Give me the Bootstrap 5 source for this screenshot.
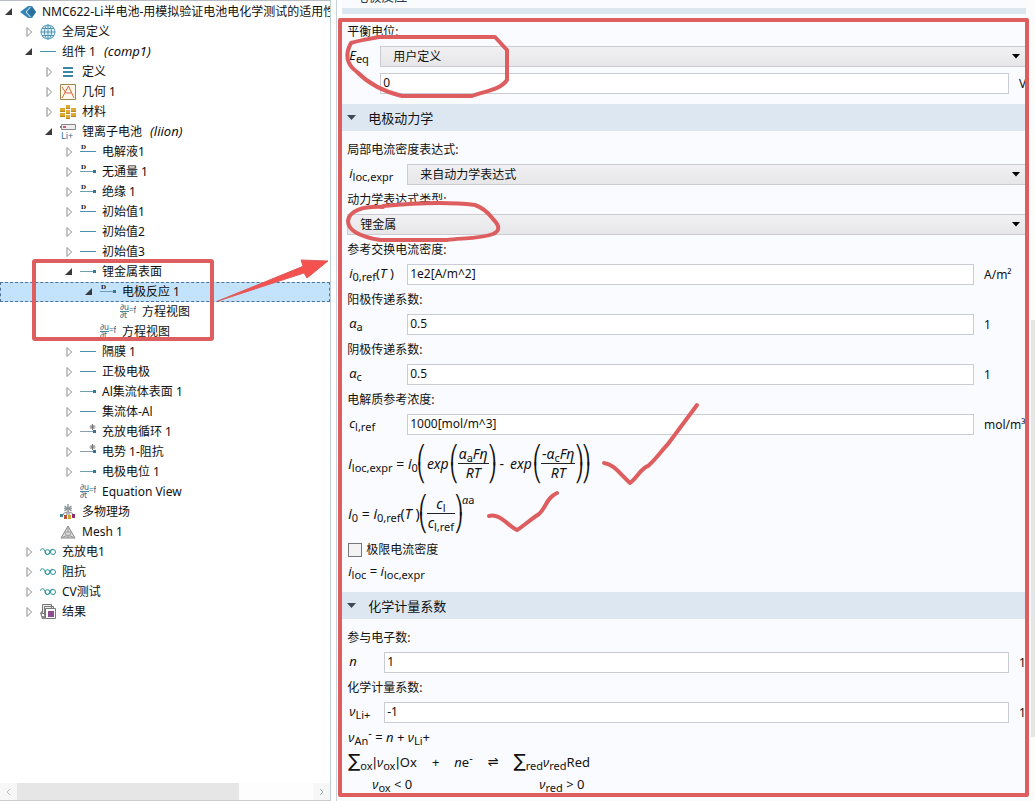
<!DOCTYPE html>
<html lang="zh-CN">
<head>
<meta charset="utf-8">
<meta name="viewport" content="width=device-width, initial-scale=1">
<title>NMC622-Li半电池</title>
<link href="https://cdn.jsdelivr.net/npm/bootstrap@5.3.0/dist/css/bootstrap.min.css" rel="stylesheet">
<style>
  :root { --pen: #de5e60; }
  body { font: 12px/20px "Noto Sans", "Noto Sans CJK SC", sans-serif; color: #111; background: #fff; }

  /* model tree */
  .tree-pane { flex: 0 0 32%; min-width: 0; padding-top: 1px; border-top: 1px solid #b9bec4; border-right: 1px solid #bccfd2; }
  .tree-row { height: 20px; padding-left: calc(var(--lv) * 20px + 4px); white-space: nowrap; }
  .tree-row i { font-size: 13px; line-height: 18px; padding-bottom: 2px; }
  .lv0 { --lv: 0; } .lv1 { --lv: 1; } .lv2 { --lv: 2; } .lv3 { --lv: 3; } .lv4 { --lv: 4; } .lv5 { --lv: 5; }
  .tree-row svg { display: block; flex: none; }
  .twist { width: 10px; height: 20px; margin-right: 6px; flex: none; padding: 0; border: 0; background: none; }
  .tree-row .ico { width: 16px; height: 16px; margin-right: 6px; }
  .tree-row.active { background: #c3e2fb; outline: 1px dashed #4d7396; outline-offset: -1px; }
  .hbar { height: 18px; background: #fdfdfd; border-bottom: 1px solid #c8cccc; }
  .hbar button { width: 17px; padding: 0; border: 0; background: #f7f7f7; }
  .hbar .thumb { width: 75%; background: #e6e6e6; }

  /* settings */
  .set-pane { padding-left: 5px; min-width: 0; }
  .set-inner { border-left: 1px solid #c9d3d8; padding-left: 5px; min-width: 0; }
  .sheet { background: #fafbfe; min-width: 0; }
  .rail { width: 9px; flex: none; background: #fcfcfd; }
  .rail-thumb { width: 4px; margin-top: 320px; height: 52%; background: #e6e6e6; }
  .prev-head { height: 8px; padding: 0 0 2px 13px; font-size: 13px; line-height: 20px; color: #243a52; }
  .strip { height: 6px; margin: 0 -5px 5px 0; background: #dde7f2; }
  .sect { height: 27px; margin: 8px -5px 6px 0; padding-left: 5px; background: #dde7f2; font-size: 13px; }
  .sect svg { width: 9px; height: 6px; margin-right: 12px; }
  .line { height: 25px; padding-left: 5px; white-space: nowrap; }
  .sub-line { margin-top: 2px; }
  .sym-a { width: 33px; } .sym-b { width: 60px; } .sym-c { width: 37px; }
  .unit { padding-left: 10px; overflow: hidden; flex: none; }
  .unit-s { width: 17px; } .unit-l { width: 52px; overflow: visible; }
  .form-control, .form-select { font-size: 12px; line-height: 15px; height: 21px; min-height: 0; border: 1px solid #c9ccd4; border-radius: 0; color: #111; min-width: 0; }
  .form-control { padding: 0 2px 2px; background: #fff; }
  .form-select { padding: 0 24px 0 12px; border-right: 0; border-color: #cbcbd0; background-color: #ebebed;
    background-image: url("data:image/svg+xml,%3Csvg xmlns='http://www.w3.org/2000/svg' viewBox='0 0 8 5'%3E%3Cpath d='M0 0h8L4 4.5z'/%3E%3C/svg%3E"), linear-gradient(#f0f0f2, #e7e7e9);
    background-size: 8px 5px, 100% 100%; background-position: right 6px center, 0 0; background-repeat: no-repeat; }
  .form-check-input[type=checkbox] { width: 14px; height: 14px; margin: 0 4px 0 1px; border: 1px solid #777; border-radius: 0; background: #f3f3f3; }

  /* formulas */
  .fx { font-size: 13px; line-height: 18px; padding-left: 6px; white-space: nowrap; }
  .line > .fx { padding: 0 0 4px 2px; flex: none; }
  .fx sub, .fx sup { font-size: 11px; font-style: normal; line-height: 0; }
  .fx sub { bottom: -3px; } .fx sup { top: -5px; }
  .big { font-size: 14px; padding-top: 8px; padding-bottom: 4px; }
  .func { padding: 0 2px; }
  .frac { display: inline-flex; flex-direction: column; text-align: center; }
  .frac > span { padding: 0 1px; height: 19px; }
  .frac > span:first-child { border-bottom: 1px solid #222; }
  .paren { display: inline-flex; flex-direction: column; font: 18px/18px "DejaVu Sans", sans-serif; width: 7px; align-items: center; }
  .sym { font-family: "DejaVu Sans", sans-serif; }
  .sigma { font-family: "DejaVu Sans", sans-serif; font-size: 18px; line-height: 18px; }
  .sum-row { padding-bottom: 2px; }
  .term { margin-left: 15px; }
  .cond { margin-left: 127px; }
  .pw { align-self: flex-start; }

  /* marker pen */
  .pen { position: absolute; left: 0; top: 0; pointer-events: none; fill: none; stroke: var(--pen); stroke-width: 4; stroke-linecap: round; stroke-linejoin: round; }
  .frame { position: absolute; inset: 18px 6px 4px 7px; border: 4px solid var(--pen); border-radius: 2px; pointer-events: none; }
</style>
</head>
<body>
<svg width="0" height="0" class="position-absolute" aria-hidden="true">
  <symbol id="closed" viewBox="0 0 10 20"><path d="M3 5.5v9l4.500-4.500z" fill="#fff" stroke="#8c8c8c"/></symbol>
  <symbol id="open" viewBox="0 0 10 20"><path d="M8 6v7H1z" fill="#3a3a3a"/></symbol>
  <symbol id="root" viewBox="0 0 16 16"><path d="M0 8 8 2h4l4 6-4 6H8z" fill="#3787b5"/><path d="M8 8l4-5 4 5-4 5z" fill="#2b6f9e"/><path d="M10.500 3 6 8l4.500 5" fill="none" stroke="#d5ecf8"/></symbol>
  <symbol id="globe" viewBox="0 0 16 16"><g fill="#e6f4fa" stroke="#4b93b3"><circle cx="8" cy="8" r="7"/><ellipse cx="8" cy="8" rx="3.500" ry="7"/><path d="M8 1v14M1 8h14M2 4.500h12M2 11.500h12"/></g></symbol>
  <symbol id="dash" viewBox="0 0 16 16"><path d="M0 7.500h16" stroke="#4f8fae"/></symbol>
  <symbol id="dashdot" viewBox="0 0 16 16"><path d="M0 7.500h14" stroke="#6f9fae"/><path d="M13 6h3v3h-3z" fill="#2c7d96"/></symbol>
  <symbol id="dmark" viewBox="0 0 16 16"><path d="M0 7.500h16" stroke="#4f8fae"/><text x="1" y="5" font-family="Liberation Serif, serif" font-size="7" font-weight="bold" fill="#111">D</text></symbol>
  <symbol id="dmarkdot" viewBox="0 0 16 16"><path d="M0 7.500h14" stroke="#6f9fae"/><path d="M13 6h3v3h-3z" fill="#3a7390"/><text x="1" y="5" font-family="Liberation Serif, serif" font-size="7" font-weight="bold" fill="#111">D</text></symbol>
  <symbol id="stardot" viewBox="0 0 16 16"><path d="M0 7.500h14" stroke="#8aa2ad"/><path d="M13 6h3v3h-3z" fill="#3a7390"/><path d="M12.500 0v6M9.500 3h6M10.500 1l4 4M14.500 1l-4 4" stroke="#777"/></symbol>
  <symbol id="lines3" viewBox="0 0 16 16"><path d="M3 4h10M3 8h10M3 12h10" stroke="#3a86a8" stroke-width="2"/></symbol>
  <symbol id="geom" viewBox="0 0 16 16"><path d="M.5.500h15v15H.5z" fill="#fff8ec" stroke="#9a8a4a"/><path d="M2 14 8.500 2 14 14M2 3l4 6h5" fill="none" stroke="#d8643c"/></symbol>
  <symbol id="mat" viewBox="0 0 16 16"><g fill="#e0a930"><path d="M6 1h4v4H6zM0 4h5v4H0zM11 4h5v4h-5zM6 6h4v4H6zM0 9h5v4H0zM11 9h5v4h-5zM6 11h4v4H6z"/></g><path d="M6 4h4v1H6zM0 7h5v1H0zM6 9h4v1H6zM0 12h5v1H0zM6 14h4v1H6zM11 7h5v1h-5zM11 12h5v1h-5z" fill="#b58420"/></symbol>
  <symbol id="liion" viewBox="0 0 16 16"><path d="M1.500.500h14v5h-14z" fill="#eee" stroke="#888"/><path d="M3 2h3v2H3z" fill="#c9607a"/><path d="M0 2h1v2H0z" fill="#777"/><text x="1" y="15" font-family="Noto Sans, sans-serif" font-size="9" fill="#2d6f8f">Li+</text></symbol>
  <symbol id="eqn" viewBox="0 0 16 16"><g font-family="Noto Sans, sans-serif" font-size="8" fill="#2b6480"><text x="0" y="6">∂u</text><text x="0" y="14">∂t</text><text x="9" y="9">=f</text></g><path d="M0 7.500h9" stroke="#4b86a0"/></symbol>
  <symbol id="multi" viewBox="0 0 16 16"><path d="M8 0v8M4.500 2l7 5M11.500 2l-7 5M4 4.500h8" stroke="#909a9e" stroke-width="1.500"/><path d="M7 8v3M3 11c0-2 2-2 4-3M8 8c4 1 5 1 5 3M9 9v3" stroke="#777" fill="none"/><path d="M0 10h3v3H0z" fill="#3b8595"/><path d="M4 11h3v4H4z" fill="#b4553e"/><path d="M8 11h3v4H8z" fill="#d6a12f"/><path d="M12 10h3v4h-3z" fill="#8b2f73"/></symbol>
  <symbol id="mesh" viewBox="0 0 16 16"><path d="M8 2 15 14H1z" fill="#ddd" stroke="#8a8a8a"/><path d="M4.500 8h7L8 14zM8 2v6M1 14l7-3 7 3" fill="none" stroke="#9a9a9a"/></symbol>
  <symbol id="study" viewBox="0 0 16 16"><path d="M0 7c1-3 4-3 5 0 0 3 1 3.500 2.500 3.500S10 9 10 8s1-4 3-2" fill="none" stroke="#27939c"/><circle cx="7.500" cy="8" r="2.300" fill="none" stroke="#27939c"/><circle cx="13" cy="8" r="2.500" fill="none" stroke="#27939c"/></symbol>
  <symbol id="result" viewBox="0 0 16 16"><g fill="#eee" stroke="#777"><path d="M2.500.500h9v9h-9zM4.500 2.500h9v9h-9z"/><path d="M5.500 4.500h10v10h-10z" fill="#fff"/></g><path d="M8 7h6v6H8z" fill="#8e4d8e"/><path d="M0 9l2-2v5h3v3H2z" fill="#888"/></symbol>
</svg>

<div class="d-flex vh-100 overflow-hidden">
  <nav class="tree-pane d-flex flex-column position-relative" aria-label="模型树">
    <ul class="list-unstyled mb-0 flex-grow-1 overflow-hidden">
      <li class="tree-row lv0 d-flex align-items-center overflow-hidden"><button class="twist" aria-label="折叠"><svg width="10" height="20"><use href="#open"/></svg></button><svg class="ico"><use href="#root"/></svg>NMC622-Li半电池-用模拟验证电池电化学测试的适用性</li>
      <li class="tree-row lv1 d-flex align-items-center"><button class="twist" aria-label="展开"><svg width="10" height="20"><use href="#closed"/></svg></button><svg class="ico"><use href="#globe"/></svg>全局定义</li>
      <li class="tree-row lv1 d-flex align-items-center"><button class="twist" aria-label="折叠"><svg width="10" height="20"><use href="#open"/></svg></button><svg class="ico"><use href="#dash"/></svg>组件 1 <i class="ms-2">(comp1)</i></li>
      <li class="tree-row lv2 d-flex align-items-center"><button class="twist" aria-label="展开"><svg width="10" height="20"><use href="#closed"/></svg></button><svg class="ico"><use href="#lines3"/></svg>定义</li>
      <li class="tree-row lv2 d-flex align-items-center"><button class="twist" aria-label="展开"><svg width="10" height="20"><use href="#closed"/></svg></button><svg class="ico"><use href="#geom"/></svg>几何 1</li>
      <li class="tree-row lv2 d-flex align-items-center"><button class="twist" aria-label="展开"><svg width="10" height="20"><use href="#closed"/></svg></button><svg class="ico"><use href="#mat"/></svg>材料</li>
      <li class="tree-row lv2 d-flex align-items-center"><button class="twist" aria-label="折叠"><svg width="10" height="20"><use href="#open"/></svg></button><svg class="ico"><use href="#liion"/></svg>锂离子电池 <i class="ms-2">(liion)</i></li>
      <li class="tree-row lv3 d-flex align-items-center"><button class="twist" aria-label="展开"><svg width="10" height="20"><use href="#closed"/></svg></button><svg class="ico"><use href="#dmark"/></svg>电解液1</li>
      <li class="tree-row lv3 d-flex align-items-center"><button class="twist" aria-label="展开"><svg width="10" height="20"><use href="#closed"/></svg></button><svg class="ico"><use href="#dmarkdot"/></svg>无通量 1</li>
      <li class="tree-row lv3 d-flex align-items-center"><button class="twist" aria-label="展开"><svg width="10" height="20"><use href="#closed"/></svg></button><svg class="ico"><use href="#dmarkdot"/></svg>绝缘 1</li>
      <li class="tree-row lv3 d-flex align-items-center"><button class="twist" aria-label="展开"><svg width="10" height="20"><use href="#closed"/></svg></button><svg class="ico"><use href="#dmark"/></svg>初始值1</li>
      <li class="tree-row lv3 d-flex align-items-center"><button class="twist" aria-label="展开"><svg width="10" height="20"><use href="#closed"/></svg></button><svg class="ico"><use href="#dash"/></svg>初始值2</li>
      <li class="tree-row lv3 d-flex align-items-center"><button class="twist" aria-label="展开"><svg width="10" height="20"><use href="#closed"/></svg></button><svg class="ico"><use href="#dash"/></svg>初始值3</li>
      <li class="tree-row lv3 d-flex align-items-center"><button class="twist" aria-label="折叠"><svg width="10" height="20"><use href="#open"/></svg></button><svg class="ico"><use href="#dashdot"/></svg>锂金属表面</li>
      <li class="tree-row lv4 d-flex align-items-center active"><button class="twist" aria-label="折叠"><svg width="10" height="20"><use href="#open"/></svg></button><svg class="ico"><use href="#dmarkdot"/></svg>电极反应 1</li>
      <li class="tree-row lv5 d-flex align-items-center"><span class="twist"></span><svg class="ico"><use href="#eqn"/></svg>方程视图</li>
      <li class="tree-row lv4 d-flex align-items-center"><span class="twist"></span><svg class="ico"><use href="#eqn"/></svg>方程视图</li>
      <li class="tree-row lv3 d-flex align-items-center"><button class="twist" aria-label="展开"><svg width="10" height="20"><use href="#closed"/></svg></button><svg class="ico"><use href="#dash"/></svg>隔膜 1</li>
      <li class="tree-row lv3 d-flex align-items-center"><button class="twist" aria-label="展开"><svg width="10" height="20"><use href="#closed"/></svg></button><svg class="ico"><use href="#dash"/></svg>正极电极</li>
      <li class="tree-row lv3 d-flex align-items-center"><button class="twist" aria-label="展开"><svg width="10" height="20"><use href="#closed"/></svg></button><svg class="ico"><use href="#dashdot"/></svg>Al集流体表面 1</li>
      <li class="tree-row lv3 d-flex align-items-center"><button class="twist" aria-label="展开"><svg width="10" height="20"><use href="#closed"/></svg></button><svg class="ico"><use href="#dash"/></svg>集流体-Al</li>
      <li class="tree-row lv3 d-flex align-items-center"><button class="twist" aria-label="展开"><svg width="10" height="20"><use href="#closed"/></svg></button><svg class="ico"><use href="#stardot"/></svg>充放电循环 1</li>
      <li class="tree-row lv3 d-flex align-items-center"><button class="twist" aria-label="展开"><svg width="10" height="20"><use href="#closed"/></svg></button><svg class="ico"><use href="#stardot"/></svg>电势 1-阻抗</li>
      <li class="tree-row lv3 d-flex align-items-center"><button class="twist" aria-label="展开"><svg width="10" height="20"><use href="#closed"/></svg></button><svg class="ico"><use href="#dashdot"/></svg>电极电位 1</li>
      <li class="tree-row lv3 d-flex align-items-center"><span class="twist"></span><svg class="ico"><use href="#eqn"/></svg>Equation View</li>
      <li class="tree-row lv2 d-flex align-items-center"><span class="twist"></span><svg class="ico"><use href="#multi"/></svg>多物理场</li>
      <li class="tree-row lv2 d-flex align-items-center"><span class="twist"></span><svg class="ico"><use href="#mesh"/></svg>Mesh 1</li>
      <li class="tree-row lv1 d-flex align-items-center"><button class="twist" aria-label="展开"><svg width="10" height="20"><use href="#closed"/></svg></button><svg class="ico"><use href="#study"/></svg>充放电1</li>
      <li class="tree-row lv1 d-flex align-items-center"><button class="twist" aria-label="展开"><svg width="10" height="20"><use href="#closed"/></svg></button><svg class="ico"><use href="#study"/></svg>阻抗</li>
      <li class="tree-row lv1 d-flex align-items-center"><button class="twist" aria-label="展开"><svg width="10" height="20"><use href="#closed"/></svg></button><svg class="ico"><use href="#study"/></svg>CV测试</li>
      <li class="tree-row lv1 d-flex align-items-center"><button class="twist" aria-label="展开"><svg width="10" height="20"><use href="#closed"/></svg></button><svg class="ico"><use href="#result"/></svg>结果</li>
    </ul>
    <div class="hbar d-flex">
      <button class="d-flex align-items-center justify-content-center" aria-label="向左滚动"><svg width="5" height="8"><path d="M4 1 1 4l3 3" fill="none" stroke="#bbb"/></svg></button>
      <div class="flex-grow-1 d-flex"><div class="thumb"></div></div>
      <button class="d-flex align-items-center justify-content-center" aria-label="向右滚动"><svg width="5" height="8"><path d="M1 1l3 3-3 3" fill="none" stroke="#9bb5b5"/></svg></button>
    </div>
    <svg class="pen" width="331" height="400" aria-hidden="true">
      <rect x="34" y="260" width="178" height="78" rx="1"/>
      <path d="M218 300 304 272 307 277 328 260 301 259 303 265z" fill="#f4514f" stroke-width="1"/>
    </svg>
  </nav>

  <main class="set-pane flex-grow-1 position-relative d-flex">
    <div class="set-inner d-flex flex-grow-1">
      <form class="sheet flex-grow-1">
        <div class="prev-head d-flex align-items-end"><span>电极反应</span></div>
        <div class="strip"></div>
        <div class="line d-flex align-items-center"><label for="eeq">平衡电位:</label></div>
        <div class="line d-flex align-items-center"><span class="fx sym-a"><i>E</i><sub>eq</sub></span><select id="eeq" class="form-select flex-grow-1 w-auto"><option>用户定义</option></select></div>
        <div class="line sub-line d-flex align-items-center"><span class="sym-a"></span><input class="form-control flex-grow-1 w-auto" aria-label="平衡电位值" value="0"><span class="unit unit-s">V</span></div>

        <div class="sect d-flex align-items-center"><svg><path d="M0 0h9L4.500 5z" fill="#3c4a56"/></svg>电极动力学</div>
        <div class="line d-flex align-items-center"><label for="iloc">局部电流密度表达式:</label></div>
        <div class="line d-flex align-items-center"><span class="fx sym-b"><i>i</i><sub>loc,expr</sub></span><select id="iloc" class="form-select flex-grow-1 w-auto"><option>来自动力学表达式</option></select></div>
        <div class="line d-flex align-items-center"><label for="ktype">动力学表达式类型:</label></div>
        <div class="line d-flex align-items-center"><select id="ktype" class="form-select"><option>锂金属</option></select></div>
        <div class="line d-flex align-items-center"><label for="i0">参考交换电流密度:</label></div>
        <div class="line d-flex align-items-center"><span class="fx sym-b"><i>i</i><sub>0,ref</sub>(<i>T</i> )</span><input id="i0" class="form-control flex-grow-1 w-auto" value="1e2[A/m^2]"><span class="unit unit-l">A/m²</span></div>
        <div class="line d-flex align-items-center"><label for="aa">阳极传递系数:</label></div>
        <div class="line d-flex align-items-center"><span class="fx sym-b"><i>α</i><sub>a</sub></span><input id="aa" class="form-control flex-grow-1 w-auto" value="0.5"><span class="unit unit-l">1</span></div>
        <div class="line d-flex align-items-center"><label for="ac">阴极传递系数:</label></div>
        <div class="line d-flex align-items-center"><span class="fx sym-b"><i>α</i><sub>c</sub></span><input id="ac" class="form-control flex-grow-1 w-auto" value="0.5"><span class="unit unit-l">1</span></div>
        <div class="line d-flex align-items-center"><label for="cl">电解质参考浓度:</label></div>
        <div class="line d-flex align-items-center"><span class="fx sym-b"><i>c</i><sub>l,ref</sub></span><input id="cl" class="form-control flex-grow-1 w-auto" value="1000[mol/m^3]"><span class="unit unit-l">mol/m³</span></div>

        <div class="fx big d-flex align-items-center">
          <span><i>i</i><sub>loc,expr</sub> = <i>i</i><sub>0</sub></span>
          <span class="paren"><span>⎛</span><span>⎝</span></span><i class="func">exp</i>
          <span class="paren"><span>⎛</span><span>⎝</span></span>
          <span class="frac"><span><i>α</i><sub>a</sub><i>Fη</i></span><span><i>RT</i></span></span>
          <span class="paren"><span>⎞</span><span>⎠</span></span>
          <span class="px-1">-</span><i class="func">exp</i>
          <span class="paren"><span>⎛</span><span>⎝</span></span>
          <span class="frac"><span>-<i>α</i><sub>c</sub><i>Fη</i></span><span><i>RT</i></span></span>
          <span class="paren"><span>⎞</span><span>⎠</span></span>
          <span class="paren"><span>⎞</span><span>⎠</span></span>
        </div>
        <div class="fx big d-flex align-items-center">
          <span><i>i</i><sub>0</sub> = <i>i</i><sub>0,ref</sub>(<i>T</i> )</span>
          <span class="paren"><span>⎛</span><span>⎝</span></span>
          <span class="frac"><span><i>c</i><sub>l</sub></span><span><i>c</i><sub>l,ref</sub></span></span>
          <span class="paren"><span>⎞</span><span>⎠</span></span>
          <span class="pw"><sup><i>α</i>a</sup></span>
        </div>
        <div class="line d-flex align-items-center"><input type="checkbox" class="form-check-input" id="lim"><label for="lim">极限电流密度</label></div>
        <div class="fx pb-1"><i>i</i><sub>loc</sub> = <i>i</i><sub>loc,expr</sub></div>

        <div class="sect d-flex align-items-center"><svg><path d="M0 0h9L4.500 5z" fill="#3c4a56"/></svg>化学计量系数</div>
        <div class="line d-flex align-items-center"><label for="ne">参与电子数:</label></div>
        <div class="line d-flex align-items-center"><span class="fx sym-c"><i>n</i></span><input id="ne" class="form-control flex-grow-1 w-auto" value="1"><span class="unit unit-s">1</span></div>
        <div class="line d-flex align-items-center"><label for="nu">化学计量系数:</label></div>
        <div class="line d-flex align-items-center"><span class="fx sym-c"><i>ν</i><sub>Li+</sub></span><input id="nu" class="form-control flex-grow-1 w-auto" value="-1"><span class="unit unit-s">1</span></div>
        <div class="line fx sum-row d-flex align-items-center"><span><i>ν</i><sub>An</sub><sup>-</sup> = <i>n</i> + <i>ν</i><sub>Li</sub>+</span></div>
        <div class="line fx sum-row d-flex align-items-center"><span><span class="sigma">∑</span><sub>ox</sub><span class="sym">|</span><i>ν</i><sub>ox</sub><span class="sym">|</span>Ox</span><span class="term">+</span><span class="term"><i>n</i>e<sup>-</sup></span><span class="term sym">⇌</span><span class="term"><span class="sigma">∑</span><sub>red</sub><i>ν</i><sub>red</sub>Red</span></div>
        <div class="fx d-flex"><span class="ms-4"><i>ν</i><sub>ox</sub> &lt; 0</span><span class="cond"><i>ν</i><sub>red</sub> &gt; 0</span></div>
      </form>
      <div class="rail d-flex justify-content-end"><div class="rail-thumb"></div></div>
    </div>
    <div class="frame"></div>
    <svg class="pen" width="400" height="801" viewBox="331 0 400 801" aria-hidden="true">
      <path d="M351 43C360 40 370 39 379 37H495L507 50V80C500 90 485 91 472 96H402C385 92 368 83 357 72 346 64 345 54 351 43"/>
      <path d="M383 206C415 203 450 202 475 205 486 209 490 215 493 219 500 226 500 231 493 234 480 239 460 238 447 240H380C362 237 348 231 348 221 349 211 362 206 383 207"/>
      <path d="M604 463C614 464 620 474 630 483 638 477 641 468 648 466 656 459 662 450 668 444L697 405"/>
      <path d="M489 516C500 513 508 526 517 530 525 525 531 519 539 514 546 508 546 498 557 493"/>
    </svg>
  </main>
</div>
<script src="https://cdn.jsdelivr.net/npm/bootstrap@5.3.0/dist/js/bootstrap.bundle.min.js"></script>
</body>
</html>
